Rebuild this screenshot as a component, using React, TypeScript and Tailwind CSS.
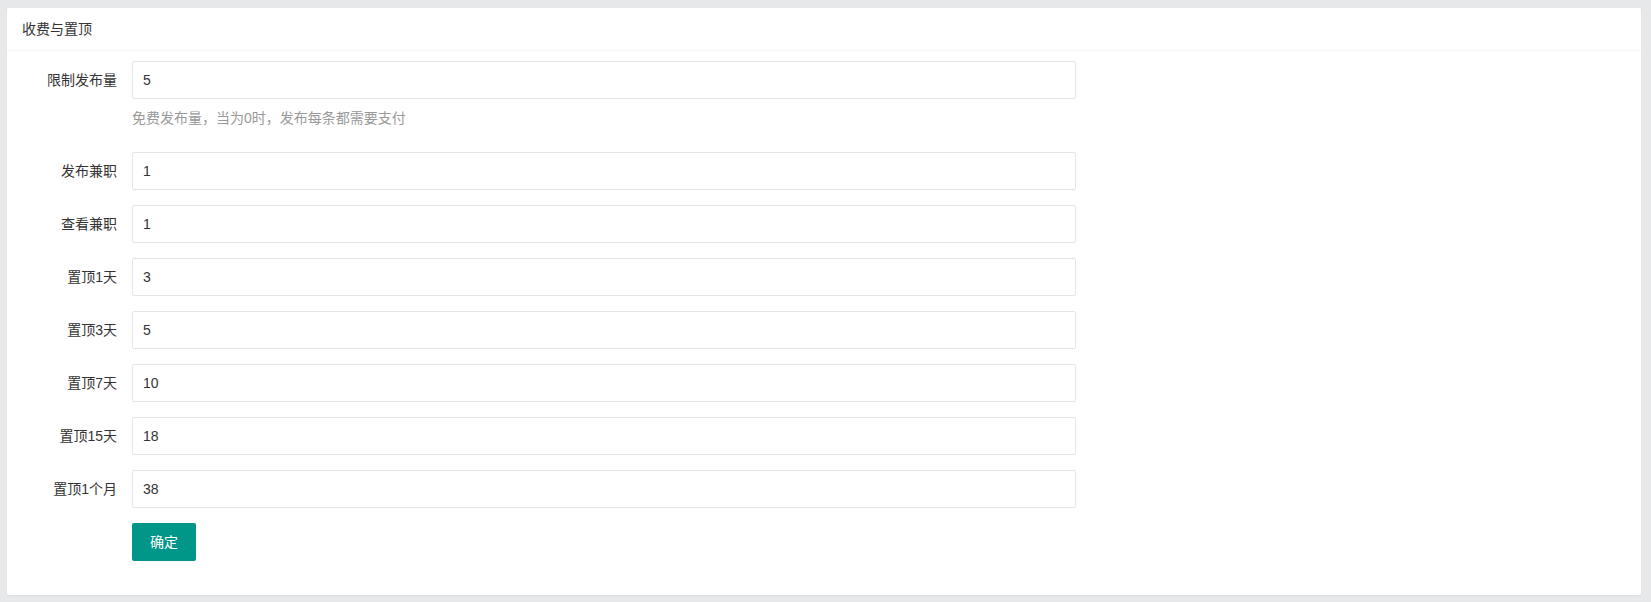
import React from "react";

const fields = [
  { label: "发布兼职", value: "1" },
  { label: "查看兼职", value: "1" },
  { label: "置顶1天", value: "3" },
  { label: "置顶3天", value: "5" },
  { label: "置顶7天", value: "10" },
  { label: "置顶15天", value: "18" },
  { label: "置顶1个月", value: "38" },
];

const FormRow = ({ label, value }: { label: string; value: string }) => (
  <div className="flex mb-[15px]">
    <label className="w-[110px] shrink-0 py-[9px] pr-[15px] text-right leading-[20px] text-[14px] text-[#333]">
      {label}
    </label>
    <input
      defaultValue={value}
      className="w-[944px] h-[38px] px-[10px] border border-[#e6e6e6] rounded-[2px] bg-white text-[14px] text-[#333] outline-none"
    />
  </div>
);

const App = () => {
  return (
    <div
      className="min-h-[602px] bg-[#e7e8ea] pt-[8px] pb-[8px] pl-[7px] pr-[10px]"
      style={{ fontFamily: '"Liberation Sans", "Noto Sans CJK SC", sans-serif' }}
    >
      <div className="bg-white rounded-[2px] shadow-[0_1px_2px_0_rgba(0,0,0,0.05)]">
        {/* Header */}
        <div className="h-[43px] leading-[42px] px-[15px] border-b border-[#f6f6f6] text-[14px] text-[#333]">
          收费与置顶
        </div>

        {/* Body */}
        <div className="px-[15px] pt-[10px] pb-[19px]">
          <div className="mb-[15px]">
            <div className="flex">
              <label className="w-[110px] shrink-0 py-[9px] pr-[15px] text-right leading-[20px] text-[14px] text-[#333]">
                限制发布量
              </label>
              <input
                defaultValue="5"
                className="w-[944px] h-[38px] px-[10px] border border-[#e6e6e6] rounded-[2px] bg-white text-[14px] text-[#333] outline-none"
              />
            </div>
            <div className="ml-[110px] py-[9px] leading-[20px] text-[14px] text-[#999]">
              免费发布量，当为0时，发布每条都需要支付
            </div>
          </div>

          {fields.map((f) => (
            <FormRow key={f.label} label={f.label} value={f.value} />
          ))}

          <div className="flex mb-[15px]">
            <div className="w-[110px] shrink-0" />
            <button className="h-[38px] px-[18px] rounded-[2px] bg-[#009688] text-white text-[14px]">
              确定
            </button>
          </div>
        </div>
      </div>
    </div>
  );
};

export default App;
